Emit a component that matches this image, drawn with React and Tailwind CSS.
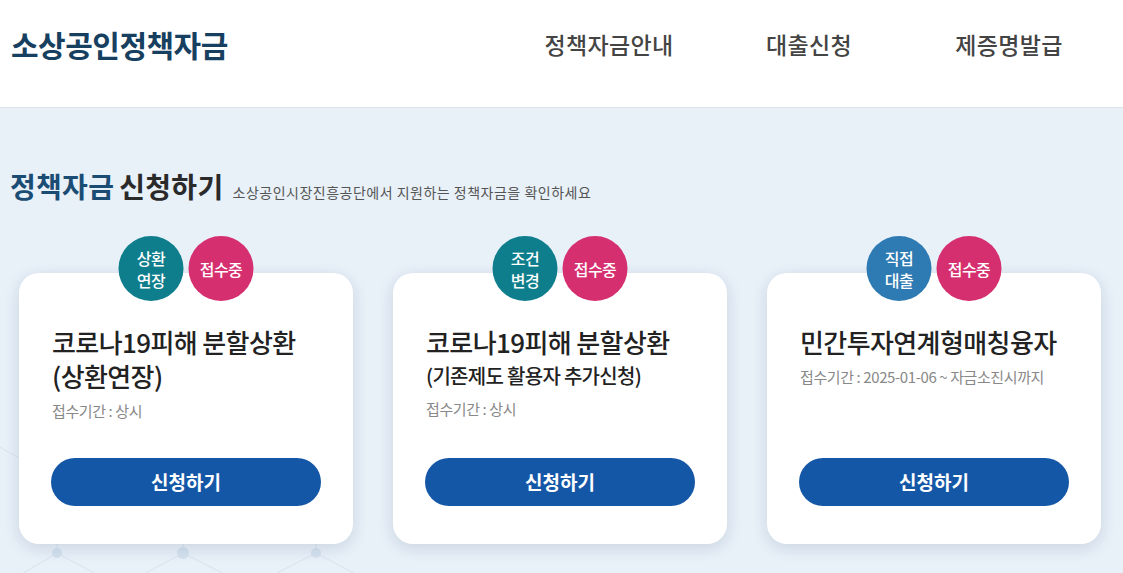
import React from "react";

const FONT = { fontFamily: '"Noto Sans CJK KR", "Noto Sans", sans-serif' };

const navItems = ["정책자금안내", "대출신청", "제증명발급"];

const cards = [
  {
    badge: ["상환", "연장"],
    badgeColor: "bg-[#0f7e8c]",
    title: "코로나19피해 분할상환",
    sub: "(상환연장)",
    subSmall: false,
    period: "접수기간 : 상시",
  },
  {
    badge: ["조건", "변경"],
    badgeColor: "bg-[#0f7e8c]",
    title: "코로나19피해 분할상환",
    sub: "(기존제도 활용자 추가신청)",
    subSmall: true,
    period: "접수기간 : 상시",
  },
  {
    badge: ["직접", "대출"],
    badgeColor: "bg-[#2e7ab2]",
    title: "민간투자연계형매칭융자",
    sub: null,
    period: "접수기간 : 2025-01-06 ~ 자금소진시까지",
  },
];

// faint network decoration behind the cards
const NetworkBg = () => (
  <svg
    className="absolute inset-0 w-full h-full pointer-events-none"
    viewBox="0 0 1123 466"
    preserveAspectRatio="none"
  >
    <g stroke="#d6e3ef" strokeWidth="1" fill="none">
      <line x1="0" y1="340" x2="57" y2="372" />
      <line x1="0" y1="480" x2="57" y2="446" />
      <line x1="57" y1="446" x2="120" y2="480" />
      <line x1="120" y1="480" x2="183" y2="446" />
      <line x1="183" y1="446" x2="250" y2="480" />
      <line x1="250" y1="480" x2="316" y2="446" />
      <line x1="316" y1="446" x2="380" y2="480" />
      <line x1="57" y1="446" x2="57" y2="420" />
      <line x1="183" y1="446" x2="183" y2="420" />
      <line x1="316" y1="446" x2="316" y2="420" />
    </g>
    <g fill="#d3e1ee">
      <circle cx="57" cy="446" r="5" />
      <circle cx="183" cy="446" r="6" />
      <circle cx="316" cy="446" r="5" />
    </g>
  </svg>
);

const Card = ({ card }) => (
  <div className="relative w-[334px] h-[271px] shrink-0 bg-white rounded-[20px] shadow-[0_4px_16px_rgba(20,50,90,0.14)] flex flex-col px-[32px] pt-[52px] pb-[38px]">
    {/* badges */}
    <div className="absolute -top-[37px] left-1/2 -translate-x-1/2 flex gap-[5px]">
      <div
        className={`w-[65px] h-[65px] rounded-full ${card.badgeColor} text-white flex flex-col items-center justify-center text-[16px] leading-[22px] font-medium tracking-[-0.5px]`}
      >
        <span>{card.badge[0]}</span>
        <span>{card.badge[1]}</span>
      </div>
      <div className="w-[65px] h-[65px] rounded-full bg-[#d62f70] text-white flex items-center justify-center text-[16px] font-medium tracking-[-0.5px]">
        접수중
      </div>
    </div>

    <div className="pl-[1px]">
      <h3 className="text-[26px] leading-[34px] font-medium tracking-[-0.6px] text-[#222] whitespace-nowrap">
        {card.title}
      </h3>
      {card.sub && (
        <p
          className={
            card.subSmall
              ? "mt-[2px] text-[20px] leading-[30px] font-medium tracking-[-0.7px] text-[#222] whitespace-nowrap"
              : "text-[26px] leading-[34px] font-medium tracking-[-0.6px] text-[#222] whitespace-nowrap"
          }
        >
          {card.sub}
        </p>
      )}
      <p className="mt-[8px] text-[15px] leading-[20px] tracking-[-0.4px] text-[#888] whitespace-nowrap">
        {card.period}
      </p>
    </div>

    <button className="mt-auto h-[48px] w-full rounded-full bg-[#1557a7] text-white text-[19px] font-bold tracking-[0px]">
      신청하기
    </button>
  </div>
);

export default function App() {
  return (
    <div style={FONT} className="w-[1123px] h-[573px] overflow-hidden bg-[#e8f0f8]">
      {/* Header */}
      <header className="h-[108px] bg-white border-b border-[#dde2e8] flex items-start pt-[24px] pl-[11px] pr-[14px]">
        <h1 className="text-[30px] leading-[40px] font-bold tracking-[-0.5px] text-[#173f5f]">
          소상공인정책자금
        </h1>
        <nav className="ml-auto flex">
          {navItems.map((item) => (
            <a
              key={item}
              className="w-[200px] text-center text-[23px] leading-[40px] font-medium tracking-[0.3px] text-[#444]"
            >
              {item}
            </a>
          ))}
        </nav>
      </header>

      {/* Section */}
      <section className="relative h-[465px]">
        <NetworkBg />
        <div className="relative pt-[60px] pl-[10px] flex items-baseline">
          <h2 className="text-[28px] leading-[36px] font-bold tracking-[0.3px] whitespace-nowrap">
            <span className="text-[#1a4c74]">정책자금</span>
            <span className="text-[#2a2a2a] ml-[5px]">신청하기</span>
          </h2>
          <p className="ml-[9px] text-[14px] tracking-[0.5px] text-[#555] whitespace-nowrap">
            소상공인시장진흥공단에서 지원하는 정책자금을 확인하세요
          </p>
        </div>

        <div className="relative mt-[69px] pl-[19px] flex gap-[40px]">
          {cards.map((card, i) => (
            <Card key={i} card={card} />
          ))}
        </div>
      </section>
    </div>
  );
}
